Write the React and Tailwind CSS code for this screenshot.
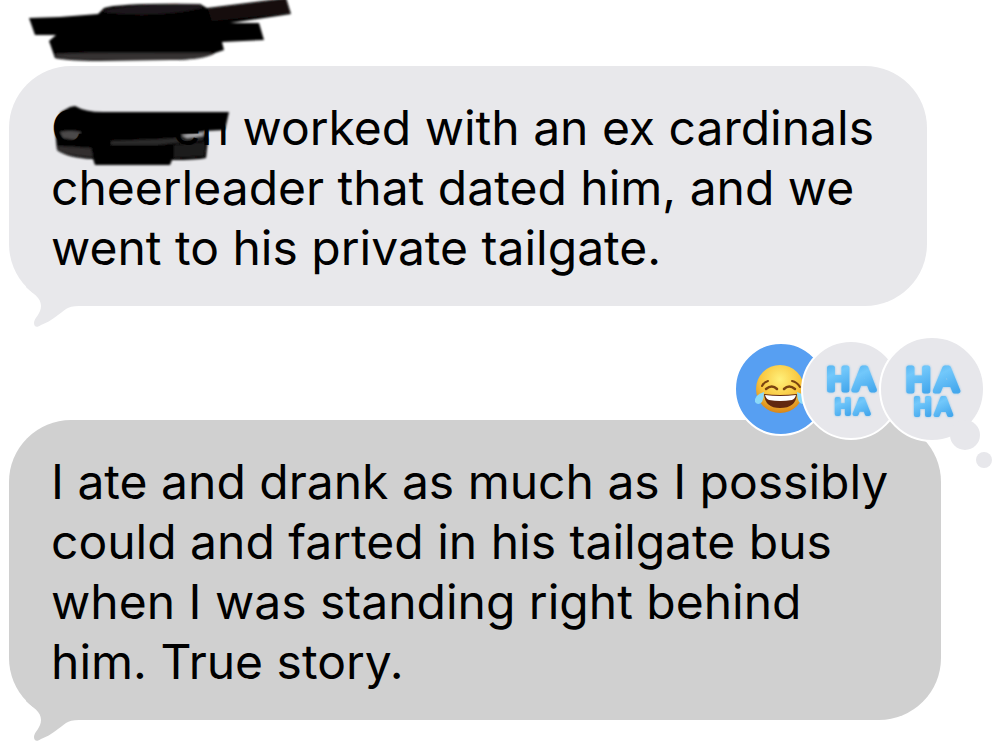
function Tail({ className }) {
    return (
        <svg className={className} viewBox="0 0 80 52" width="80" height="52" fill="currentColor" aria-hidden="true">
            <path d="M17 11C24 18 32 21 32 30C32 38 25 42 25 47C25 51 28 52 32 49C43 45 51 37 57 33C60 31 64 30 70 30V0H17Z" />
        </svg>
    )
}

function NameScribble() {
    return (
        <svg className="block" viewBox="0 0 300 66" width="300" height="66" aria-label="Name hidden">
            <defs>
                <filter id="soft"><feGaussianBlur stdDeviation="1" /></filter>
            </defs>
            <g filter="url(#soft)" fill="#050202">
                <path d="M29 18L60 17L98 14L104 8Q120 3 200 4L207 8L286 -2L291 14L230 23L259 23L264 40L222 42L224 50L215 53Q205 60 170 60L100 61Q68 61 55 58L49 41L56 35L35 35Z" />
                <path d="M208 9L286 -1L290 13L212 21Z" fill="#151111" />
                <path d="M102 11Q125 4 199 4L203 8Q160 18 108 13Z" fill="#1d191a" />
                <path d="M55 54Q60 52 214 53Q200 60 170 60L100 60Q70 60 57 57Z" fill="#343132" />
            </g>
        </svg>
    )
}

function RedactedName() {
    return (
        <span className="relative inline-flex w-[178px] justify-between">
            <svg className="absolute left-0 top-0 overflow-visible" viewBox="0 2 180 70" width="180" height="70" aria-hidden="true">
                <g filter="url(#soft)">
                    <path d="M19 11L24 10Q34 16 52 16L178 16L174 34L153 35L157 43L155 62Q145 64 121 64L119 69L44 69L42 63Q16 62 6 54L5 44L4 30L10 16Z" fill="#060303" />
                    <path d="M7 50L40 52L42 61Q16 60 7 54Z" fill="#302e2f" />
                    <path d="M123 49L155 46L153 60L123 62Z" fill="#1f1c1d" />
                    <path d="M9 36Q18 34 30 36L26 44L12 42Z" fill="#4b494a" />
                    <path d="M60 45L110 43L152 40L152 44L106 49L60 49Z" fill="#2b292a" />
                    <path d="M130 39L153 36L152 40L136 42Z" fill="#a9a9ac" />
                </g>
            </svg>
            <span className="relative">C</span>
            <span className="relative">en</span>
        </span>
    )
}

function Bubble({ tone, children }) {
    const shade = tone === 'dark' ? 'bg-[#d0d0d0]' : 'bg-[#e8e8eb]'
    const tail = tone === 'dark' ? 'text-[#d0d0d0]' : 'text-[#e8e8eb]'
    return (
        <div className={`relative w-fit rounded-[62px] pb-7 pl-[42px] pr-[53px] pt-8 ${shade}`}>
            <Tail className={`absolute left-0 top-[calc(100%-30px)] ${tail}`} />
            {children}
        </div>
    )
}

function Haha({ x, y, size }) {
    const small = size * 0.7
    return (
        <g
            className="[filter:drop-shadow(0_0_1px_#8cc4ea)]"
            fontFamily="Liberation Sans, sans-serif"
            strokeLinejoin="round"
            strokeLinecap="round"
            fill="url(#balloon)"
            stroke="url(#balloon)"
        >
            <g fontSize={size} strokeWidth="5">
                <text x={x} y={y}>H</text>
                <text x={x + size * 0.86} y={y}>A</text>
            </g>
            <g fontSize={small} strokeWidth="4">
                <text x={x + 8} y={y + 24}>H</text>
                <text x={x + 8 + small * 0.9} y={y + 24}>A</text>
            </g>
        </g>
    )
}

function Joy() {
    return (
        <g>
            <circle cx="50" cy="59" r="24" fill="url(#face)" />
            <g fill="none" stroke="#7a4310" strokeLinecap="round">
                <path d="M36 59Q42 54 47 59" strokeWidth="2.5" />
                <path d="M54 59Q59 54 65 59" strokeWidth="2.5" />
                <path d="M32 56Q34 52 38 51" strokeWidth="2" />
                <path d="M62 51Q67 52 70 57" strokeWidth="2" />
            </g>
            <path d="M34 64Q50 66 67 64Q66 78 50 78Q35 78 34 64Z" fill="#62280f" />
            <path d="M35 65Q50 67 66 65Q65 69 62 70Q50 72 39 70Q36 69 35 65Z" fill="#fff" />
            <path d="M34 62Q24 65 25 72Q28 76 32 72Q34 68 34 62Z" fill="#8bd9f8" />
            <path d="M67 62Q77 65 76 72Q73 76 69 72Q67 68 67 62Z" fill="#8bd9f8" />
        </g>
    )
}

function Reactions() {
    return (
        <svg className="absolute -right-[59px] -top-[90px]" viewBox="0 0 270 145" width="270" height="145" role="group" aria-label="Reactions">
            <defs>
                <linearGradient id="balloon" x1="0" y1="0" x2="0.3" y2="1">
                    <stop offset="0" stopColor="#4fb0ee" />
                    <stop offset="0.4" stopColor="#72c8fb" />
                    <stop offset="1" stopColor="#45a8ed" />
                </linearGradient>
                <radialGradient id="face" cx="0.5" cy="0.3" r="0.7">
                    <stop offset="0" stopColor="#fff07a" />
                    <stop offset="0.6" stopColor="#f8c53d" />
                    <stop offset="1" stopColor="#d98518" />
                </radialGradient>
            </defs>
            <circle cx="51" cy="59" r="46" fill="#579ff2" stroke="#fff" strokeWidth="2" />
            <Joy />
            <circle cx="121" cy="60" r="49" fill="#e7e7eb" stroke="#fff" strokeWidth="2" />
            <Haha x={97} y={60} size={31} />
            <circle cx="202" cy="59" r="52" fill="#e7e7eb" stroke="#fff" strokeWidth="2" />
            <circle cx="235" cy="105" r="15" fill="#e7e7eb" />
            <circle cx="254" cy="130" r="8" fill="#e7e7eb" />
            <Haha x={176} y={61} size={34} />
        </svg>
    )
}

export default function App() {
    return (
        <div className="min-h-screen overflow-hidden bg-white font-['Inter',sans-serif] text-[48px] leading-[60px] text-black">
            <NameScribble />
            <main className="flex flex-col gap-[114px] pb-8 pl-[9px]">
                <Bubble tone="light">
                    <p className="relative whitespace-nowrap">
                        <RedactedName /> worked with an ex cardinals<br />
                        cheerleader that dated him, and we<br />
                        went to his private tailgate.
                    </p>
                </Bubble>
                <Bubble tone="dark">
                    <p className="relative whitespace-nowrap">
                        I ate and drank as much as I possibly<br />
                        could and farted in his tailgate bus<br />
                        when I was standing right behind<br />
                        him. True story.
                    </p>
                    <Reactions />
                </Bubble>
            </main>
        </div>
    )
}
